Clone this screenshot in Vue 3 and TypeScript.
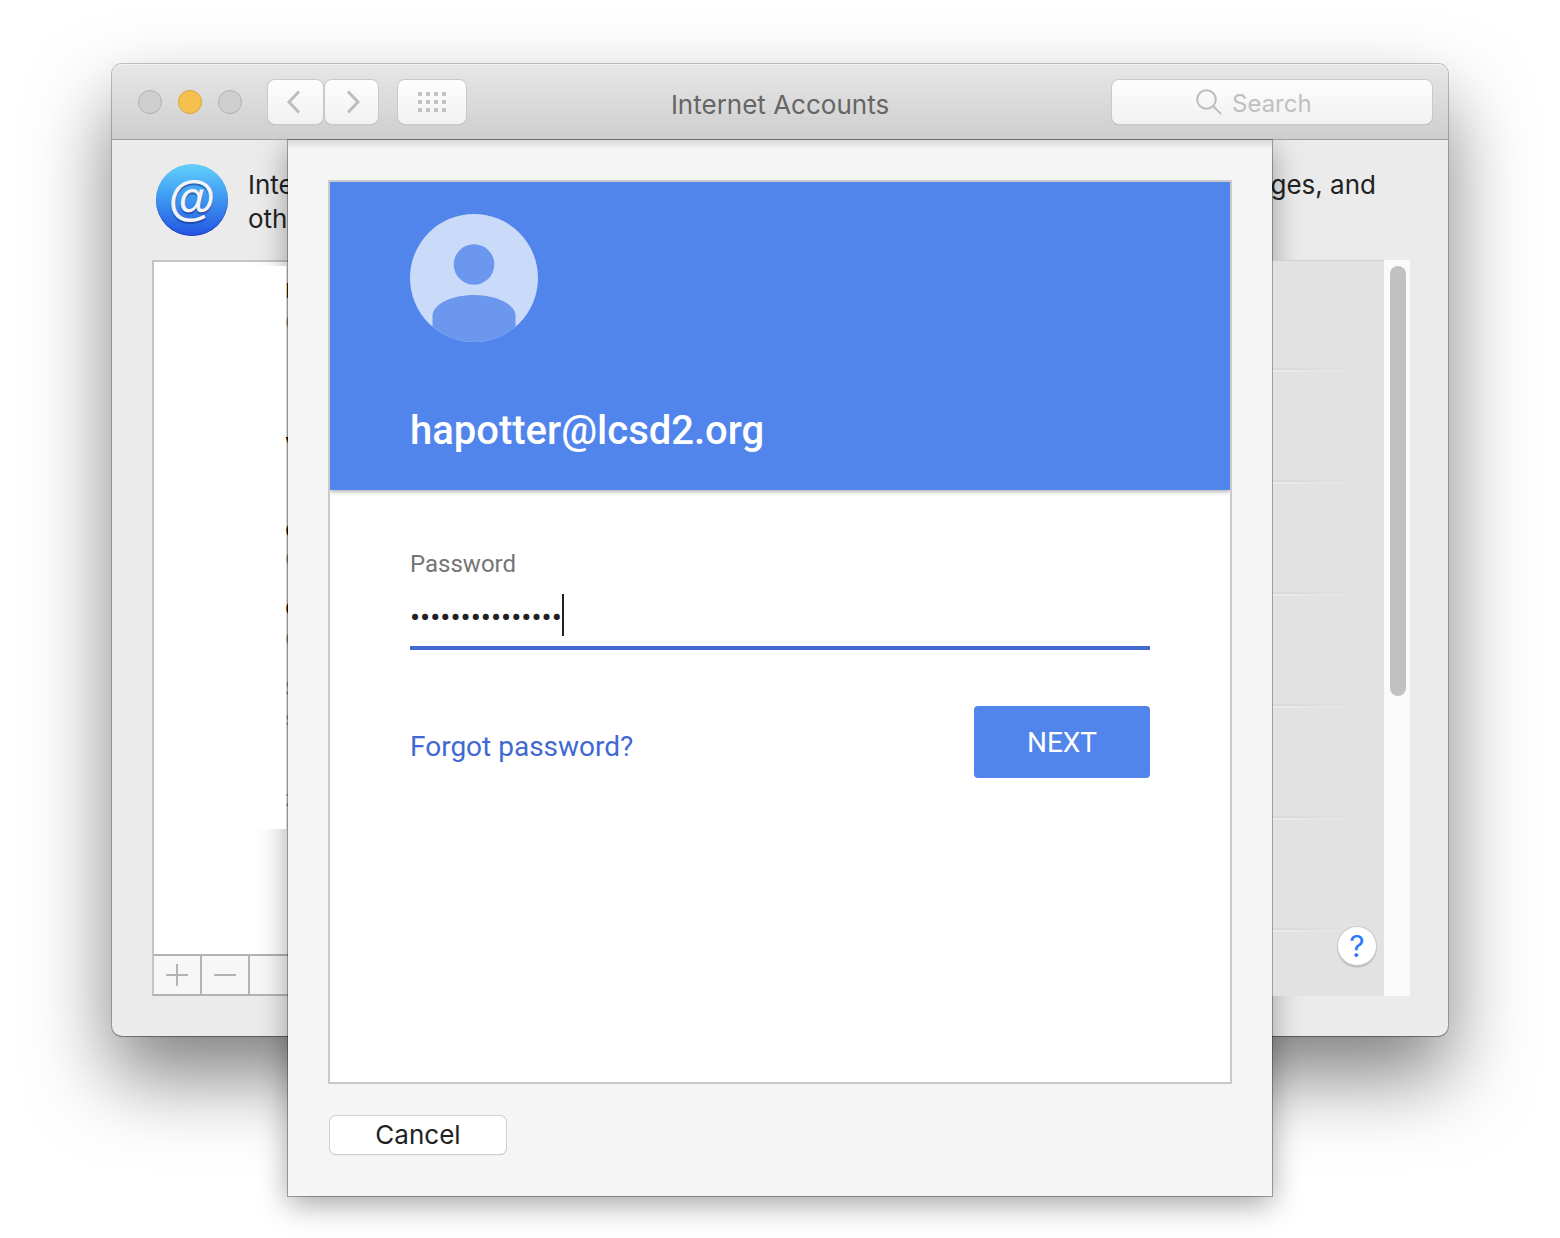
<script setup lang="ts">
import { ref } from 'vue'

interface AccountLine {
  text: string
  height: number
  dim?: boolean
}

const password = ref('aaaaaaaaaaaaaaa')
const search = ref('')

const accountLines: AccountLine[] = [
  { text: 'n', height: 46 },
  { text: 'G', height: 20, dim: true },
  { text: '', height: 92 },
  { text: 'v', height: 38 },
  { text: '', height: 50 },
  { text: 'o', height: 34 },
  { text: 'C', height: 26, dim: true },
  { text: '', height: 18 },
  { text: 'e', height: 34 },
  { text: 'C', height: 30, dim: true },
  { text: '', height: 18 },
  { text: 'S', height: 32, dim: true },
  { text: 's', height: 28, dim: true },
  { text: '', height: 50 },
  { text: 'z', height: 32, dim: true },
]
const services = [1, 2, 3, 4, 5, 6]
const gridDots = Array.from({ length: 12 }, (_, i) => ({ x: (i % 4) * 8, y: Math.floor(i / 4) * 8 }))
</script>

<template>
  <main class="desktop">
    <section class="window">
      <header class="titlebar">
        <div class="tools">
          <div class="lights">
            <button class="light" aria-label="Close"></button>
            <button class="light amber" aria-label="Minimize"></button>
            <button class="light" aria-label="Zoom"></button>
          </div>
          <div class="nav">
            <button class="tool back" aria-label="Back">
              <svg width="14" height="24" viewBox="0 0 14 24"><path d="M12 1.500L2 12l10 10.500" /></svg>
            </button>
            <button class="tool forward" aria-label="Forward">
              <svg width="14" height="24" viewBox="0 0 14 24"><path d="M2 1.500L12 12 2 22.500" /></svg>
            </button>
          </div>
          <button class="tool all" aria-label="Show all">
            <svg width="28" height="20" viewBox="0 0 28 20">
              <rect v-for="(d, i) in gridDots" :key="i" :x="d.x" :y="d.y" width="4" height="4" />
            </svg>
          </button>
        </div>
        <h1 class="title">Internet Accounts</h1>
        <label class="search">
          <svg width="26" height="26" viewBox="0 0 26 26">
            <circle cx="10.500" cy="10.500" r="9.300" />
            <path d="M17 17l8 8" />
          </svg>
          <input v-model="search" type="search" placeholder="Search" aria-label="Search" />
        </label>
      </header>

      <div class="content">
        <div class="intro">
          <span class="at-badge"><span class="at">@</span></span>
          <p class="lead">Internet<br />other</p>
          <p class="tail">Messages, and</p>
        </div>

        <div class="panels">
          <div class="accounts">
            <ul class="lines">
              <li
                v-for="(line, i) in accountLines"
                :key="i"
                :class="{ dim: line.dim }"
                :style="{ height: line.height + 'px', lineHeight: line.height + 'px' }"
              >{{ line.text }}</li>
            </ul>
            <div class="edit-bar">
              <button aria-label="Add account">
                <svg width="22" height="22" viewBox="0 0 22 22"><path d="M0 11h22M11 0v22" /></svg>
              </button>
              <button aria-label="Remove account">
                <svg width="22" height="22" viewBox="0 0 22 22"><path d="M0 11h22" /></svg>
              </button>
            </div>
          </div>
          <div class="services">
            <div class="rows">
              <div v-for="n in services" :key="n" class="row"></div>
              <button class="help" aria-label="Help">?</button>
            </div>
            <div class="scrollbar"><div class="thumb"></div></div>
          </div>
        </div>
      </div>
    </section>

    <div class="sheet-shadow"></div>

    <section class="sheet" role="dialog" aria-label="Sign in">
      <div class="card">
        <div class="profile">
          <svg class="avatar" width="128" height="128" viewBox="0 0 128 128">
            <defs>
              <clipPath id="avatar-disc"><circle cx="64" cy="64" r="64" /></clipPath>
            </defs>
            <g clip-path="url(#avatar-disc)">
              <rect width="128" height="128" fill="#cadaf9" />
              <circle cx="64" cy="50.500" r="20.300" fill="#6b97ee" />
              <path d="M22.500 128V102C22.500 90 42 81 64 81s41.500 9 41.500 21v26z" fill="#6b97ee" />
            </g>
          </svg>
          <p class="email">hapotter@lcsd2.org</p>
        </div>
        <form class="login" @submit.prevent>
          <label class="caption" for="password">Password</label>
          <div class="field">
            <input id="password" v-model="password" type="password" />
            <span class="caret"></span>
          </div>
          <div class="actions">
            <a href="#">Forgot password?</a>
            <button class="next" type="submit">NEXT</button>
          </div>
        </form>
      </div>
      <button class="cancel" type="button">Cancel</button>
    </section>
  </main>
</template>

<style>
body {
  margin: 0;
  background: #fff;
}
</style>

<style scoped>
* {
  box-sizing: border-box;
}
button {
  padding: 0;
  font: inherit;
}
h1,
p,
ul {
  margin: 0;
  padding: 0;
}
.desktop {
  display: grid;
  grid-template-columns: minmax(0, 1fr);
  padding: 64px 112px 42px;
  overflow: hidden;
  font-family: Inter, 'Liberation Sans', sans-serif;
  font-size: 26px;
  color: #222;
}
.window,
.sheet-shadow,
.sheet {
  grid-area: 1 / 1;
}
.window {
  align-self: start;
  border-radius: 10px;
  background: #ebebeb;
  box-shadow: 0 0 0 1px rgba(0, 0, 0, 0.22), 0 1px 1px rgba(0, 0, 0, 0.2), 0 40px 80px rgba(0, 0, 0, 0.5);
}

/* Title bar */
.titlebar {
  position: relative;
  z-index: 2;
  display: grid;
  grid-template-columns: 1fr auto 1fr;
  align-items: center;
  height: 76px;
  padding: 0 16px;
  border-bottom: 1px solid #9e9e9e;
  border-radius: 10px 10px 0 0;
  background: linear-gradient(#e7e7e7, #cecece);
  box-shadow: inset 0 1px 0 #f5f5f5;
}
.tools,
.lights,
.nav {
  display: flex;
  align-items: center;
}
.lights {
  gap: 16px;
  margin: 0 26px 0 10px;
}
.light {
  width: 24px;
  height: 24px;
  border: 1px solid #b0b0b0;
  border-radius: 50%;
  background: #cfcfcf;
}
.light.amber {
  border-color: #dba23c;
  background: #f6c04f;
}
.nav {
  gap: 2px;
  margin-right: 20px;
}
.tool,
.search {
  display: flex;
  align-items: center;
  justify-content: center;
  height: 44px;
  border: 0;
  border-radius: 7px;
  background: linear-gradient(#fdfdfd, #f1f1f1);
  box-shadow: 0 0 0 1px #c9c9c9, 0 1px 1px #a4a4a4;
}
.back {
  width: 55px;
  padding-right: 4px;
}
.forward {
  width: 53px;
  padding-left: 2px;
}
.all {
  width: 68px;
}
.tool path,
.search circle,
.search path {
  fill: none;
  stroke: #bdbdbd;
  stroke-width: 3;
}
.tool rect {
  fill: #c2c2c2;
}
.title {
  padding-top: 6px;
  font-size: 26px;
  font-weight: 400;
  line-height: 32px;
  color: #666;
}
.search {
  justify-self: end;
  width: 320px;
  padding-left: 84px;
  gap: 10px;
}
.search circle,
.search path {
  stroke-width: 2;
}
.search input {
  flex: 1;
  min-width: 0;
  padding: 4px 0 0;
  border: 0;
  outline: 0;
  background: none;
  font: inherit;
  font-size: 24px;
  color: #222;
}
.search input::placeholder {
  color: #c0c0c0;
  opacity: 1;
}

/* Preferences behind the sheet */
.content {
  padding: 24px 38px 40px 40px;
}
.intro {
  display: flex;
  align-items: flex-start;
  height: 96px;
  padding: 0 34px 0 4px;
  line-height: 34px;
}
.at-badge {
  display: flex;
  align-items: center;
  justify-content: center;
  width: 72px;
  height: 72px;
  margin-right: 20px;
  padding-bottom: 2px;
  border-radius: 50%;
  background: linear-gradient(#62d0fb, #3f9bf2 45%, #2554e2);
  box-shadow: inset 0 -1px 1px #1c45b8;
}
.at {
  font-family: 'Liberation Sans', Arial, sans-serif;
  font-size: 48px;
  font-weight: 700;
  line-height: 56px;
  color: #f4f4f4;
  text-shadow: 0 2px 1px rgba(20, 50, 140, 0.6);
}
.lead,
.tail {
  padding-top: 4px;
}
.tail {
  margin-left: auto;
}
.panels {
  display: flex;
  height: 736px;
}
.accounts {
  display: flex;
  flex-direction: column;
  width: 440px;
  border: 2px solid #c4c4c4;
  border-bottom-color: #b3b3b3;
  background: #fff;
}
.lines {
  position: relative;
  z-index: 1;
  width: 132px;
  height: 563px;
  margin-top: 4px;
  background: #fff;
  list-style: none;
}
.lines li {
  padding-left: 131px;
  color: #111;
}
.lines .dim {
  font-size: 22px;
  color: #888;
}
.edit-bar {
  display: flex;
  margin-top: auto;
  height: 40px;
  border-top: 2px solid #b3b3b3;
  background: #f7f7f7;
}
.edit-bar button {
  display: flex;
  align-items: center;
  justify-content: center;
  width: 48px;
  border: 0;
  border-right: 2px solid #b3b3b3;
  background: none;
}
.edit-bar path {
  stroke: #b3b3b3;
  stroke-width: 2;
}
.services {
  display: flex;
  flex: 1;
  margin-left: 40px;
}
.rows {
  position: relative;
  flex: 1;
  background: #e2e2e2;
  box-shadow: inset 0 1px 0 #d0d0d0;
}
.row {
  height: 112px;
  margin-right: 16px;
  background:
    linear-gradient(90deg, #ececec 85%, #e2e2e2) bottom / 100% 2px no-repeat,
    linear-gradient(90deg, #d9d9d9 85%, #e2e2e2) 0 108px / 100% 2px no-repeat;
}
.help {
  position: absolute;
  right: 8px;
  bottom: 31px;
  width: 38px;
  height: 38px;
  border: 0;
  border-radius: 50%;
  background: #fff;
  box-shadow: 0 0 0 1px #c8c8c8, 0 2px 2px #a4a4a4;
  font-size: 30px;
  line-height: 38px;
  color: #2b79fb;
}
.scrollbar {
  width: 26px;
  padding: 6px;
  background: #fafafa;
}
.thumb {
  width: 16px;
  height: 430px;
  border-radius: 8px;
  background: #c1c1c1;
}

/* Sign-in sheet */
.sheet-shadow,
.sheet {
  margin: 76px 176px 0;
}
.sheet-shadow {
  box-shadow: 0 8px 28px rgba(0, 0, 0, 0.36);
}
.sheet {
  z-index: 3;
  padding: 40px 40px 42px;
  background: #f5f5f5 linear-gradient(#dadada, #eee) top / 100% 8px no-repeat;
  box-shadow: 0 0 0 1px rgba(0, 0, 0, 0.3);
}
.card {
  min-height: 904px;
  border: 2px solid #cacaca;
  background: #fff;
  overflow: hidden;
}
.profile {
  height: 308px;
  padding: 32px 80px;
  background: #5185eb;
  box-shadow: 0 2px 4px rgba(0, 0, 0, 0.3);
  font-family: Roboto, sans-serif;
}
.avatar {
  display: block;
}
.email {
  margin-top: 65px;
  font-size: 40px;
  font-weight: 500;
  line-height: 48px;
  color: #fff;
}
.login {
  padding: 60px 80px;
  font-family: Roboto, sans-serif;
}
.caption {
  display: block;
  font-size: 24px;
  line-height: 28px;
  color: #757575;
}
.field {
  position: relative;
  display: flex;
  padding: 16px 0 10px;
  border-bottom: 4px solid #4169d1;
}
.field input {
  flex: 1;
  min-width: 0;
  height: 42px;
  padding: 4px 0 0;
  border: 0;
  outline: 0;
  background: none;
  font-family: Roboto, sans-serif;
  font-size: 30px;
  color: #212121;
}
.caret {
  position: absolute;
  top: 16px;
  left: 152px;
  width: 2px;
  height: 42px;
  background: #212121;
}
.actions {
  display: flex;
  align-items: center;
  justify-content: space-between;
  margin-top: 56px;
  font-size: 28px;
}
.actions a {
  padding-top: 10px;
  line-height: 32px;
  color: #4169d1;
  text-decoration: none;
}
.next {
  width: 176px;
  height: 72px;
  border: 0;
  border-radius: 4px;
  background: #5185eb;
  color: #fff;
}
.cancel {
  display: block;
  width: 176px;
  height: 38px;
  margin: 32px 2px 0;
  border: 0;
  border-radius: 6px;
  background: #fff;
  box-shadow: 0 0 0 1px #cfcfcf, 0 1px 1px #b0b0b0;
  line-height: 38px;
  color: #222;
}
</style>
